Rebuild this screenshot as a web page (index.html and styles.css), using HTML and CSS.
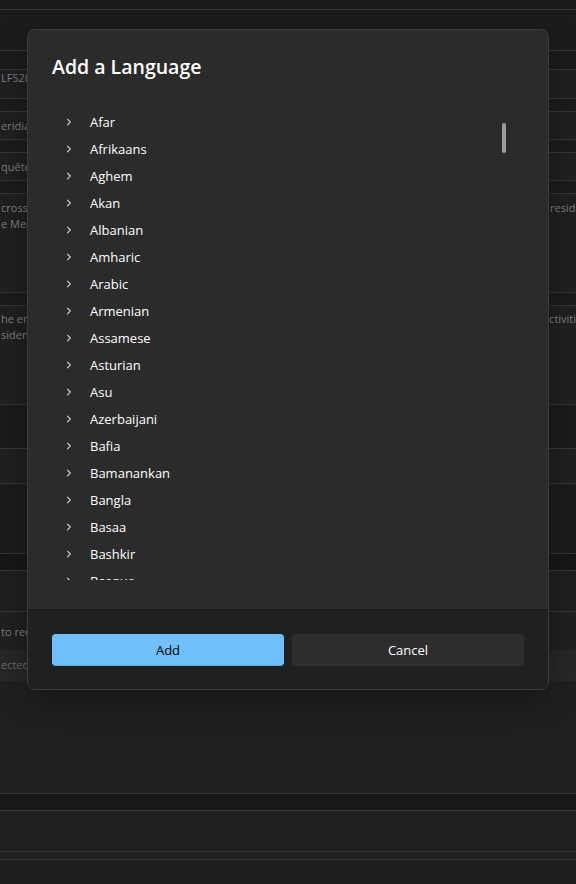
FILE: index.html
```html
<!DOCTYPE html>
<html lang="en">
<head>
<meta charset="utf-8">
<title>Add a Language</title>
<link rel="stylesheet" href="styles.css">
</head>
<body>
<div class="page">
  <div class="blk b-top"></div>
  <div class="blk b-head"></div>
  <div class="blk b-band h19"></div>
  <div class="blk b-row h29"><div class="cell t0">LFS2024 Survey</div></div>
  <div class="blk b-band h13"></div>
  <div class="blk b-row h28"><div class="cell t6">eridian Lab Study</div></div>
  <div class="blk b-band h13"></div>
  <div class="blk b-row h28"><div class="cell t6">quête sur les ménages</div></div>
  <div class="blk b-band h13"></div>
  <div class="blk b-row h99 split">
    <div class="left">
      <div class="cell">cross-sectional study of</div>
      <div class="cell">e Meridian households</div>
    </div>
    <div class="right r550"><div class="cell">residents</div></div>
  </div>
  <div class="blk b-band h13"></div>
  <div class="blk b-row h99 split pt5">
    <div class="left">
      <div class="cell">he end of the survey</div>
      <div class="cell">sidents in the area</div>
    </div>
    <div class="right r543"><div class="cell">activities</div></div>
  </div>
  <div class="blk b-dark h44"></div>
  <div class="blk b-row h35"></div>
  <div class="blk b-band h70"></div>
  <div class="blk b-deep h17"></div>
  <div class="blk b-row h41"></div>
  <div class="blk b-plain h38"><div class="cell t12">to record the answers</div></div>
  <div class="field"><div class="cell">ected language</div></div>
  <div class="blk b-row h113"></div>
  <div class="blk b-deep h17"></div>
  <div class="blk b-row h41"></div>
  <div class="blk b-row h8"></div>
  <div class="rest"></div>
</div>

<div class="dialog" role="dialog" aria-label="Add a Language">
  <div class="dlg-body">
    <h1 class="dlg-title">Add a Language</h1>
    <div class="viewport">
      <ul class="tree">
        <li class="item"><span class="chev"><svg width="6" height="8" viewBox="0 0 6 8"><path d="M1.5 1.2 L4.3 4 L1.5 6.8" /></svg></span>Afar</li>
        <li class="item"><span class="chev"><svg width="6" height="8" viewBox="0 0 6 8"><path d="M1.5 1.2 L4.3 4 L1.5 6.8" /></svg></span>Afrikaans</li>
        <li class="item"><span class="chev"><svg width="6" height="8" viewBox="0 0 6 8"><path d="M1.5 1.2 L4.3 4 L1.5 6.8" /></svg></span>Aghem</li>
        <li class="item"><span class="chev"><svg width="6" height="8" viewBox="0 0 6 8"><path d="M1.5 1.2 L4.3 4 L1.5 6.8" /></svg></span>Akan</li>
        <li class="item"><span class="chev"><svg width="6" height="8" viewBox="0 0 6 8"><path d="M1.5 1.2 L4.3 4 L1.5 6.8" /></svg></span>Albanian</li>
        <li class="item"><span class="chev"><svg width="6" height="8" viewBox="0 0 6 8"><path d="M1.5 1.2 L4.3 4 L1.5 6.8" /></svg></span>Amharic</li>
        <li class="item"><span class="chev"><svg width="6" height="8" viewBox="0 0 6 8"><path d="M1.5 1.2 L4.3 4 L1.5 6.8" /></svg></span>Arabic</li>
        <li class="item"><span class="chev"><svg width="6" height="8" viewBox="0 0 6 8"><path d="M1.5 1.2 L4.3 4 L1.5 6.8" /></svg></span>Armenian</li>
        <li class="item"><span class="chev"><svg width="6" height="8" viewBox="0 0 6 8"><path d="M1.5 1.2 L4.3 4 L1.5 6.8" /></svg></span>Assamese</li>
        <li class="item"><span class="chev"><svg width="6" height="8" viewBox="0 0 6 8"><path d="M1.5 1.2 L4.3 4 L1.5 6.8" /></svg></span>Asturian</li>
        <li class="item"><span class="chev"><svg width="6" height="8" viewBox="0 0 6 8"><path d="M1.5 1.2 L4.3 4 L1.5 6.8" /></svg></span>Asu</li>
        <li class="item"><span class="chev"><svg width="6" height="8" viewBox="0 0 6 8"><path d="M1.5 1.2 L4.3 4 L1.5 6.8" /></svg></span>Azerbaijani</li>
        <li class="item"><span class="chev"><svg width="6" height="8" viewBox="0 0 6 8"><path d="M1.5 1.2 L4.3 4 L1.5 6.8" /></svg></span>Bafia</li>
        <li class="item"><span class="chev"><svg width="6" height="8" viewBox="0 0 6 8"><path d="M1.5 1.2 L4.3 4 L1.5 6.8" /></svg></span>Bamanankan</li>
        <li class="item"><span class="chev"><svg width="6" height="8" viewBox="0 0 6 8"><path d="M1.5 1.2 L4.3 4 L1.5 6.8" /></svg></span>Bangla</li>
        <li class="item"><span class="chev"><svg width="6" height="8" viewBox="0 0 6 8"><path d="M1.5 1.2 L4.3 4 L1.5 6.8" /></svg></span>Basaa</li>
        <li class="item"><span class="chev"><svg width="6" height="8" viewBox="0 0 6 8"><path d="M1.5 1.2 L4.3 4 L1.5 6.8" /></svg></span>Bashkir</li>
        <li class="item"><span class="chev"><svg width="6" height="8" viewBox="0 0 6 8"><path d="M1.5 1.2 L4.3 4 L1.5 6.8" /></svg></span>Basque</li>
        <li class="item"><span class="chev"><svg width="6" height="8" viewBox="0 0 6 8"><path d="M1.5 1.2 L4.3 4 L1.5 6.8" /></svg></span>Belarusian</li>
      </ul>
      <div class="thumb"></div>
    </div>
  </div>
  <div class="dlg-footer">
    <button class="btn primary" type="button">Add</button>
    <button class="btn secondary" type="button">Cancel</button>
  </div>
</div>
</body>
</html>
```

FILE: styles.css
```css
* { box-sizing: border-box; }
html, body { margin: 0; padding: 0; }
body {
  background: #1f1f1f;
  font-family: "Open Sans", "Noto Sans", sans-serif;
  width: 576px;
  height: 884px;
  overflow: hidden;
  position: relative;
}

/* background page */
.page { width: 576px; }
.blk { border-bottom: 1px solid #363636; overflow: hidden; }
.b-top { height: 10px; background: #1a1a1a; }
.b-head { height: 41px; background: #1c1c1c; }
.b-band { background: #1c1c1c; }
.b-row { background: #202020; }
.b-dark { background: #1b1b1b; }
.b-deep { background: #171717; }
.b-plain { background: #202020; border-bottom: none; }
.h8 { height: 8px; } .h13 { height: 13px; } .h17 { height: 17px; } .h19 { height: 19px; }
.h28 { height: 28px; } .h29 { height: 29px; } .h35 { height: 35px; } .h38 { height: 38px; }
.h41 { height: 41px; } .h44 { height: 44px; } .h70 { height: 70px; } .h99 { height: 99px; }
.h113 { height: 113px; }

.cell {
  font-size: 11px;
  line-height: 16px;
  color: #7f7f7f;
  white-space: nowrap;
  overflow: hidden;
  padding-left: 1px;
}
.t0 { padding-top: 0; }
.t6 { padding-top: 6px; }
.t12 { padding-top: 12px; }
.split { display: flex; padding-top: 6px; }
.split.pt5 { padding-top: 5px; }
.split .left { width: 540px; flex: none; }
.split .right { flex: 1; min-width: 0; }
.r550 { margin-left: 9px; }
.r543 { margin-left: 2px; }

.field {
  height: 31px;
  background: #272727;
  padding-top: 7px;
}
.field .cell { color: #6c6c6c; }
.rest { height: 30px; background: #1f1f1f; }

/* dialog */
.dialog {
  position: absolute;
  left: 27px;
  top: 29px;
  width: 522px;
  height: 661px;
  background: #2b2b2b;
  border: 1px solid #3d3d3d;
  border-radius: 8px;
  overflow: hidden;
  display: flex;
  flex-direction: column;
  box-shadow: 0 8px 32px rgba(0,0,0,0.35);
}
.dlg-body {
  flex: 1;
  padding: 25px 24px 0;
}
.dlg-title {
  margin: 0;
  font-size: 19.5px;
  line-height: 24px;
  font-weight: 600;
  color: #ffffff;
}
.viewport {
  position: relative;
  margin-top: 21px;
  height: 480px;
  overflow: hidden;
  padding-top: 8px;
}
.tree { list-style: none; margin: 0; padding: 0; }
.item {
  height: 27px;
  display: flex;
  align-items: center;
  padding-left: 14px;
  font-size: 13px;
  color: #ffffff;
}
.chev {
  width: 24px;
  flex: none;
  display: flex;
  align-items: center;
}
.chev svg path {
  fill: none;
  stroke: #d2d2d2;
  stroke-width: 1.1;
  stroke-linecap: round;
  stroke-linejoin: round;
}
.thumb {
  position: absolute;
  left: 450px;
  top: 23px;
  width: 4px;
  height: 30px;
  border-radius: 2px;
  background: #9b9b9b;
}
.dlg-footer {
  flex: none;
  height: 80px;
  background: #202020;
  border-top: 1px solid #1c1c1c;
  padding: 24px 24px 0;
  display: flex;
  gap: 8px;
}
.btn {
  flex: 1;
  height: 32px;
  border-radius: 4px;
  font-family: "Open Sans", "Noto Sans", sans-serif;
  font-size: 13px;
  padding: 0;
}
.primary {
  background: #71c0fc;
  color: #000000;
  border: 1px solid #71c0fc;
  border-bottom-color: #5fa6dc;
}
.secondary {
  background: #2d2d2d;
  color: #ffffff;
  border: 1px solid #303030;
}
```
